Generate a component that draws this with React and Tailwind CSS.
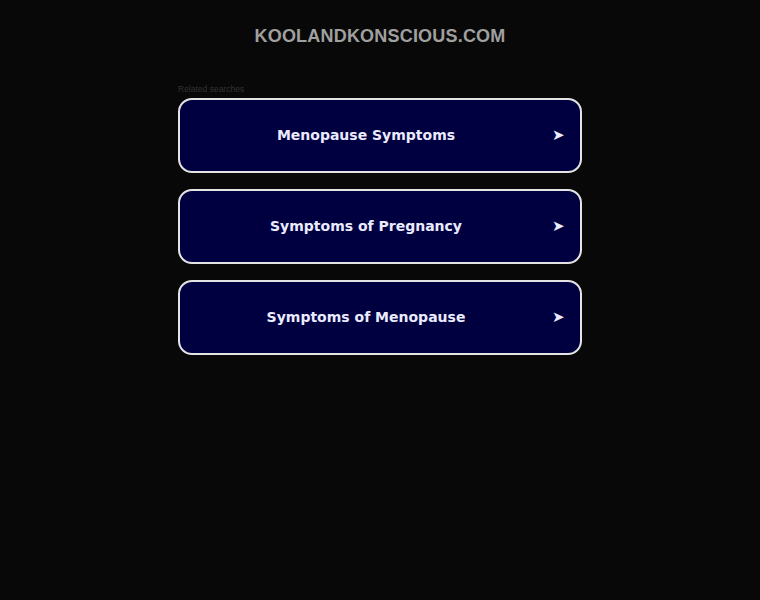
export default function App() {
  const items = ["Menopause Symptoms", "Symptoms of Pregnancy", "Symptoms of Menopause"];
  return (
    <div className="min-h-[600px] w-full bg-[#080808] flex flex-col items-center">
      <div className="mt-[25px] h-[22px] flex items-center text-[18px] font-bold tracking-[0.2px] text-[#a0a0a0]" style={{ fontFamily: '"Liberation Sans", Arial, sans-serif' }}>
        KOOLANDKONSCIOUS.COM
      </div>
      <div className="mt-[37px] w-[404px] flex flex-col">
        <div className="text-[8.5px] leading-[10px] text-[#333333] mb-[4px]" style={{ fontFamily: '"Liberation Sans", Arial, sans-serif' }}>
          Related searches
        </div>
        <div className="flex flex-col gap-[16px]">
          {items.map((t) => (
            <div key={t} className="h-[75px] rounded-[14px] border-2 border-[#e4e4e4] bg-[#000040] flex items-center">
              <span className="flex-1 text-center text-[14px] font-bold text-[#ebebff]" style={{ fontFamily: '"DejaVu Sans", Verdana, sans-serif' }}>{t}</span>
              <span className="w-[28px] pr-[16px] text-[15px] text-[#ebebff] text-right" style={{ fontFamily: '"DejaVu Sans", sans-serif' }}>➤</span>
            </div>
          ))}
        </div>
      </div>
    </div>
  );
}
